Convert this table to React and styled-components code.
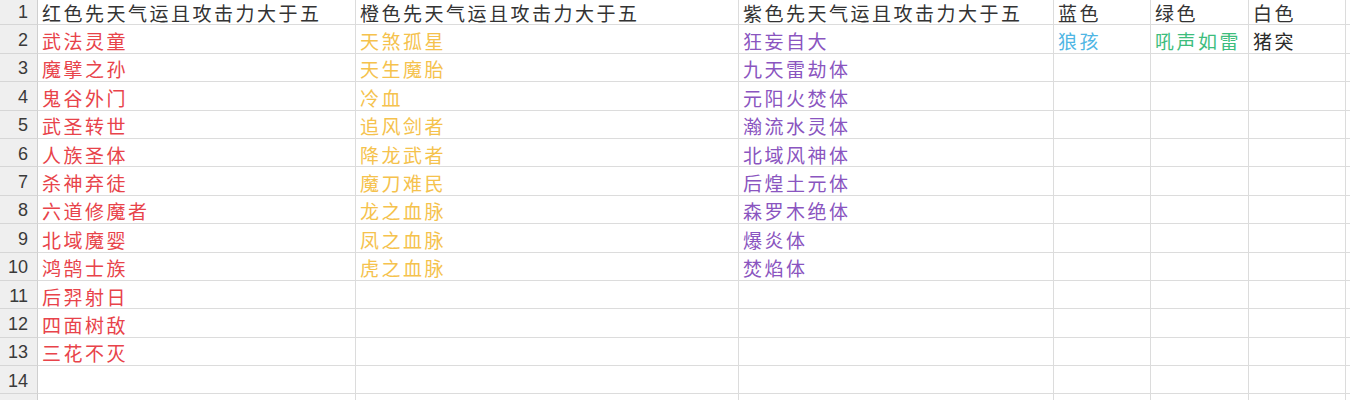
import React from 'react';
import styled, { createGlobalStyle } from 'styled-components';

const GlobalStyle = createGlobalStyle`
  html, body {
    margin: 0;
    padding: 0;
    background: #ffffff;
    overflow: hidden;
  }
`;

const COLORS = {
  red: '#e8434a',
  orange: '#f5c24d',
  purple: '#8a55c0',
  blue: '#4fb6e4',
  green: '#3dbd7d',
  white: '#2b2b2b',
  head: '#333333',
};

const headers = [
  '红色先天气运且攻击力大于五',
  '橙色先天气运且攻击力大于五',
  '紫色先天气运且攻击力大于五',
  '蓝色',
  '绿色',
  '白色',
];

const red = ['武法灵童', '魔擘之孙', '鬼谷外门', '武圣转世', '人族圣体', '杀神弃徒', '六道修魔者', '北域魔婴', '鸿鹄士族', '后羿射日', '四面树敌', '三花不灭'];
const orange = ['天煞孤星', '天生魔胎', '冷血', '追风剑者', '降龙武者', '魔刀难民', '龙之血脉', '凤之血脉', '虎之血脉'];
const purple = ['狂妄自大', '九天雷劫体', '元阳火焚体', '瀚流水灵体', '北域风神体', '后煌土元体', '森罗木绝体', '爆炎体', '焚焰体'];
const blue = ['狼孩'];
const green = ['吼声如雷'];
const white = ['猪突'];

const columns = [
  { list: red, color: COLORS.red },
  { list: orange, color: COLORS.orange },
  { list: purple, color: COLORS.purple },
  { list: blue, color: COLORS.blue },
  { list: green, color: COLORS.green },
  { list: white, color: COLORS.white },
];

// 14 numbered rows, plus the top sliver of row 15 at the bottom edge
const ROWS = 15;
const NUMBERED = 14;

const Sheet = styled.div`
  display: grid;
  grid-template-columns: 38px 318px 383px 315px 97px 98px 97px 1fr;
  grid-auto-rows: 28.4px;
  margin-top: -3px;
  width: 1350px;
`;

const RowHead = styled.div`
  box-sizing: border-box;
  background: #efefef;
  border-right: 1px solid #cfcfcf;
  border-bottom: 1px solid #d6d6d6;
  display: flex;
  align-items: center;
  justify-content: flex-end;
  padding: 3px 9px 0 0;
  font-family: "Liberation Sans", Arial, sans-serif;
  font-size: 18px;
  color: #3a3a3a;
`;

const Cell = styled.div`
  box-sizing: border-box;
  border-right: 1px solid #dcdcdc;
  border-bottom: 1px solid #dcdcdc;
  display: flex;
  align-items: center;
  padding: 3px 0 0 4px;
  white-space: nowrap;
  overflow: hidden;
  font-family: "Noto Sans CJK SC", "Noto Sans", sans-serif;
  font-size: 19px;
  letter-spacing: 2.5px;
  color: ${(p) => p.$color};
`;

export default function App() {
  const rows = [];
  for (let r = 0; r < ROWS; r++) {
    rows.push(<RowHead key={`h${r}`}>{r < NUMBERED ? r + 1 : ''}</RowHead>);
    columns.forEach((col, c) => {
      let text = '';
      let color = COLORS.head;
      if (r === 0) {
        text = headers[c];
      } else if (col.list[r - 1]) {
        text = col.list[r - 1];
        color = col.color;
      }
      rows.push(
        <Cell key={`c${r}-${c}`} $color={color}>
          {text}
        </Cell>
      );
    });
    rows.push(<Cell key={`e${r}`} $color={COLORS.head} />);
  }

  return (
    <>
      <GlobalStyle />
      <Sheet>{rows}</Sheet>
    </>
  );
}
